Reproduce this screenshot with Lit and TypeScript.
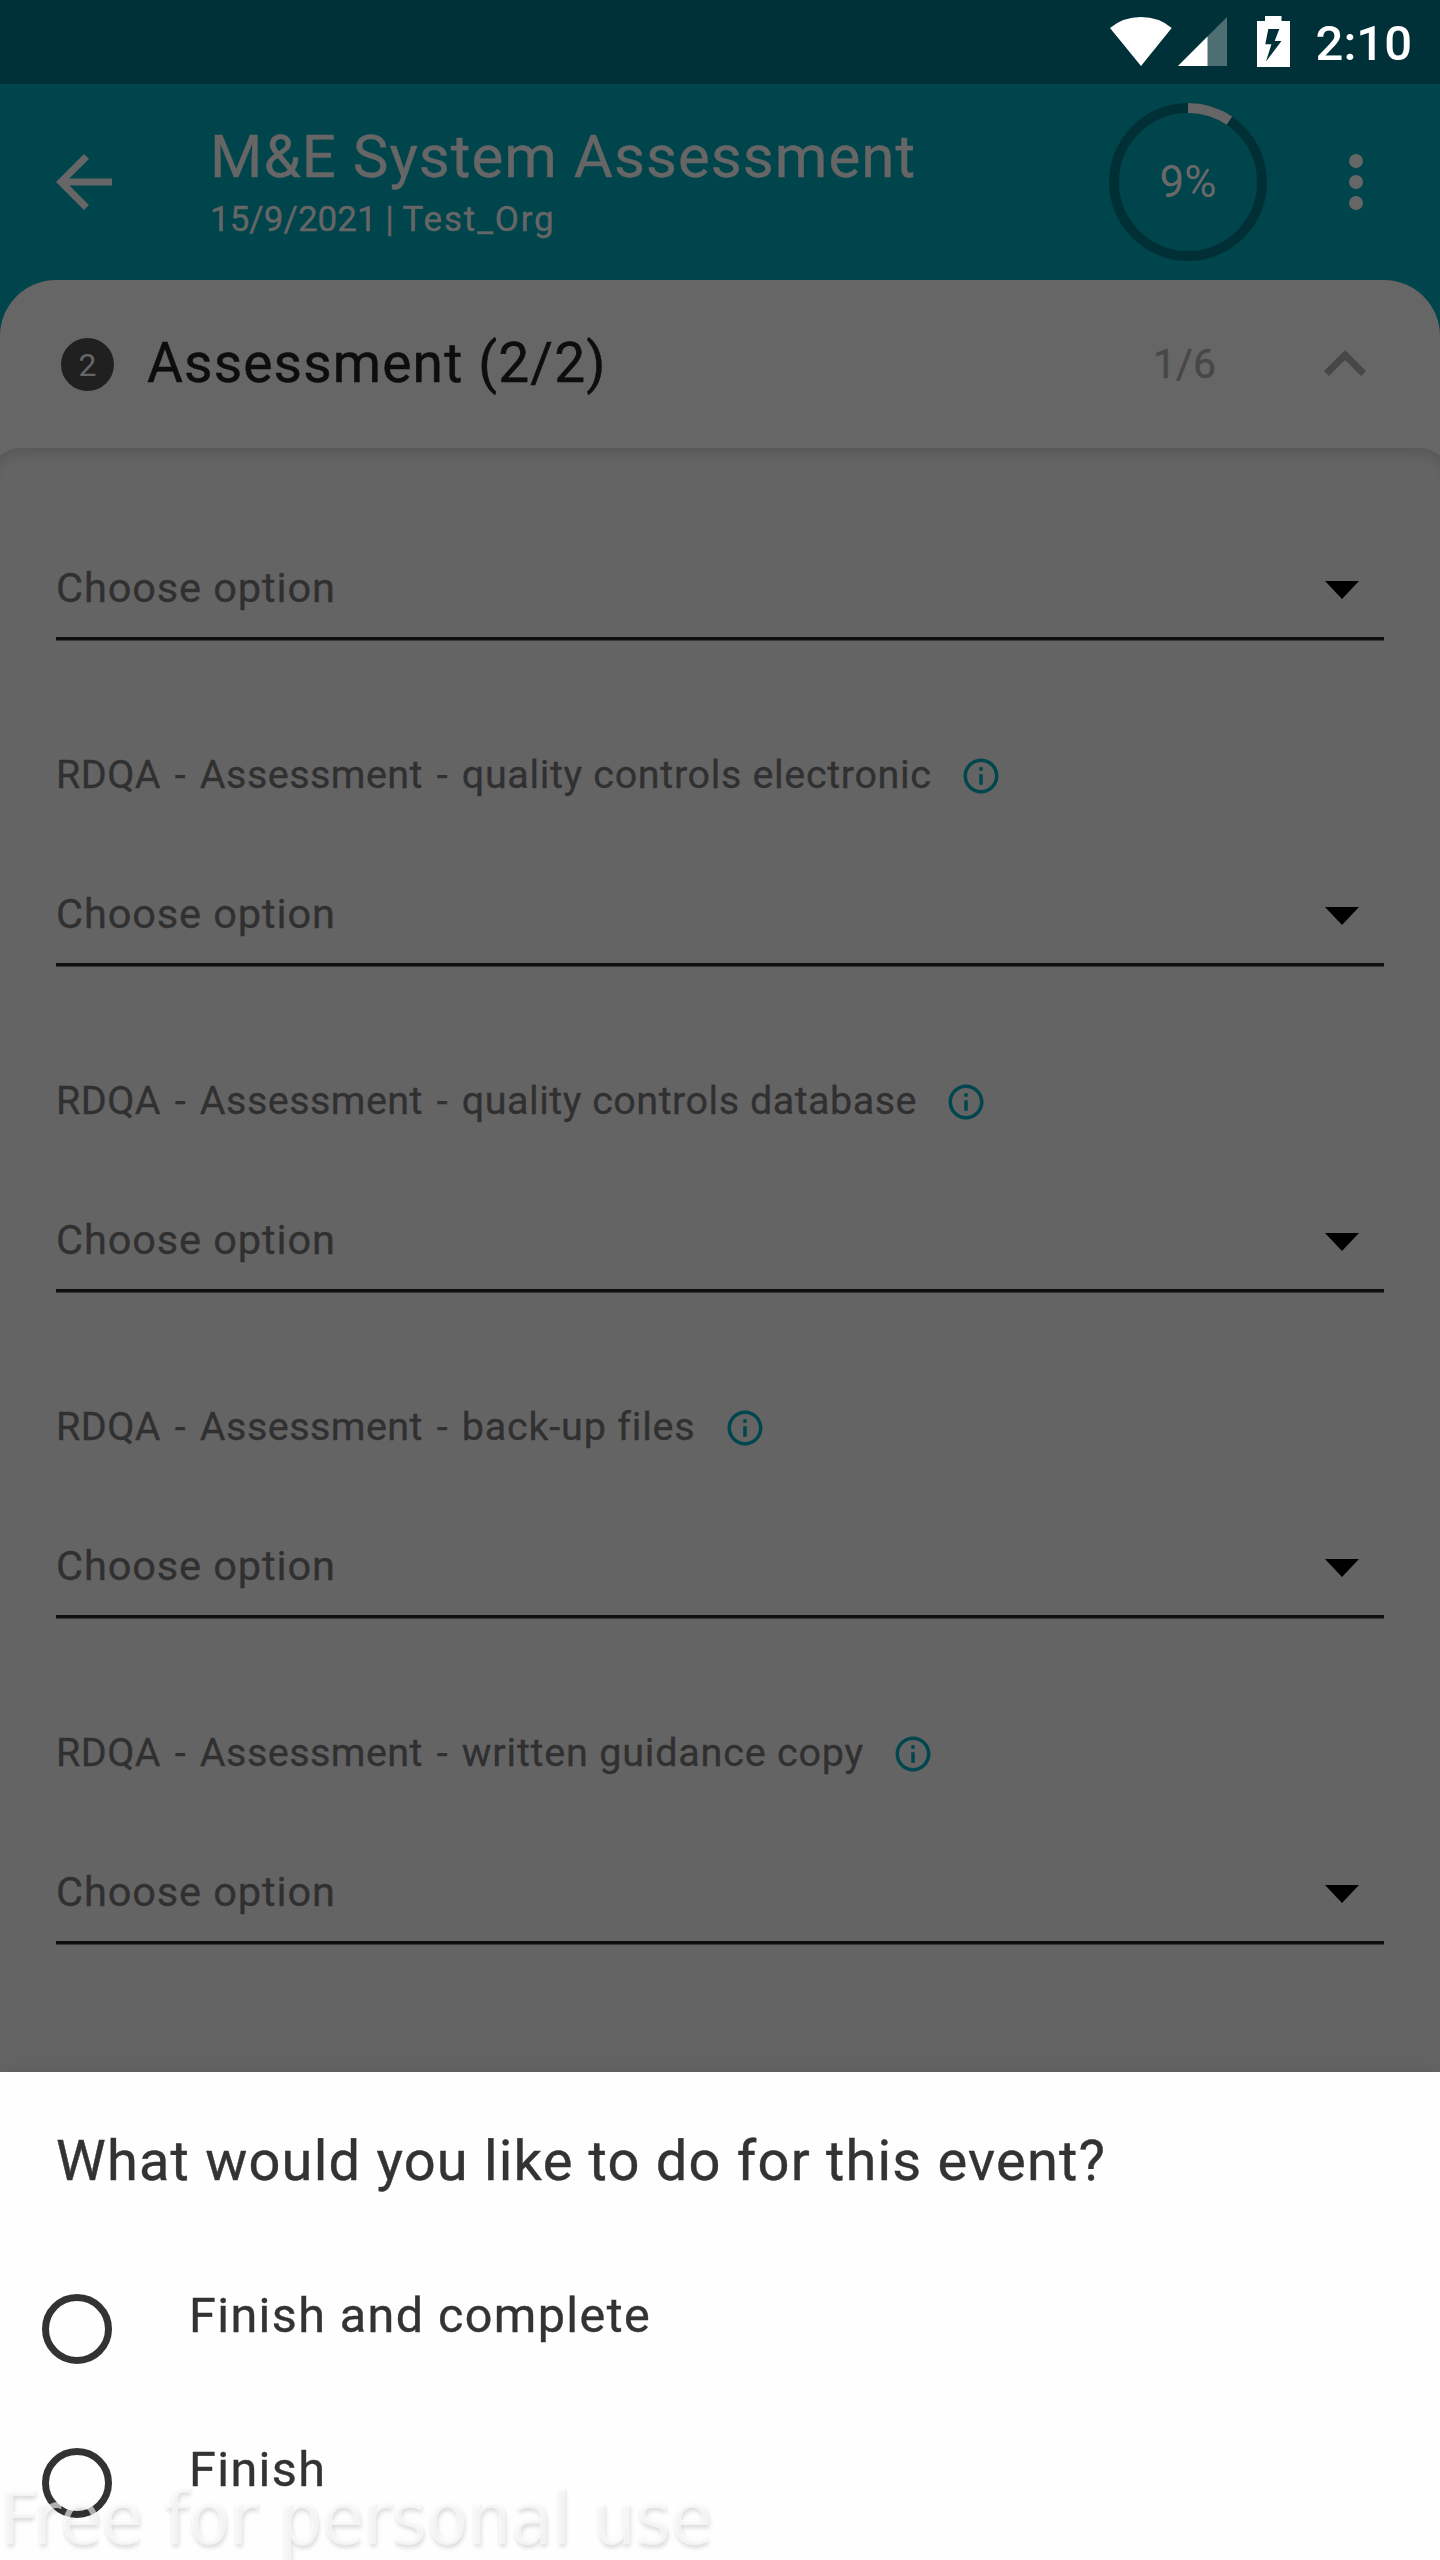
import { LitElement, html, css } from "lit";
import { customElement, property } from "lit/decorators.js";

const FIELDS = [
  { label: "", cls: "" },
  { label: "quality controls electronic", cls: "normal" },
  { label: "quality controls database", cls: "tight" },
  { label: "back-up files", cls: "loose" },
  { label: "written guidance copy", cls: "loose" },
];

@customElement("status-bar")
class StatusBar extends LitElement {
  static styles = css`
    :host { display: block; }
    .bar { height: 84px; background: #003138; display: flex; justify-content: flex-end; padding-right: 28px; box-sizing: border-box; }
    .icons { width: 190px; height: 84px; display: block; margin-right: 22px; }
    .time { font: 500 49px/84px Roboto, sans-serif; color: #fff; white-space: nowrap; padding-top: 2px; height: 82px; }
  `;
  render() {
    return html`<div class="bar">
      <svg class="icons" viewBox="1104 0 190 84">
        <path fill="#fff" d="M1110 28Q1123 17 1141 17T1171.7 28L1141 66Z" />
        <path fill="#4d6f74" d="M1227 17V66H1178Z" />
        <path fill="#fff" d="M1207.5 36.5V66H1178Z" />
        <path fill="#fff" fill-rule="evenodd" d="M1265 16H1281.5V21H1290V67H1257V21H1265ZM1268.3 29L1265.3 44.3H1271.4L1266 61.5L1281.5 41H1274.7L1279.3 29Z" />
      </svg>
      <span class="time">2:10</span>
    </div>`;
  }
}

@customElement("app-header")
class AppHeader extends LitElement {
  static styles = css`
    :host { display: block; }
    .header { height: 196px; background: #00444c; display: flex; align-items: center; padding: 0 42px; font-family: Roboto, sans-serif; color: #666; }
    .back { width: 84px; height: 84px; flex: none; }
    .titles { margin-left: 84px; width: 816px; height: 196px; padding-top: 37px; box-sizing: border-box; white-space: nowrap; -webkit-text-stroke: 0.4px #666; }
    .title { font-size: 60px; line-height: 72px; letter-spacing: 1.02px; }
    .sub { font-size: 35px; line-height: 44px; margin-top: 5px; }
    .org { letter-spacing: 1.85px; }
    .ring { width: 168px; height: 168px; margin-left: 78px; flex: none; }
    .pct { font: 44px Roboto, sans-serif; }
    .more { width: 84px; height: 84px; margin-left: 42px; flex: none; }
  `;
  render() {
    const c = 2 * Math.PI * 74;
    return html`<div class="header">
      <svg class="back" viewBox="0 0 24 24" fill="#666"><path d="M20 11H7.83l5.59-5.59L12 4l-8 8 8 8 1.41-1.41L7.83 13H20z" /></svg>
      <div class="titles">
        <div class="title">M&amp;E System Assessment</div>
        <div class="sub">15/9/2021 | <span class="org">Test_Org</span></div>
      </div>
      <svg class="ring" viewBox="0 0 168 168">
        <circle cx="84" cy="84" r="74" fill="none" stroke="#003035" stroke-width="10" />
        <circle cx="84" cy="84" r="74" fill="none" stroke="#666" stroke-width="10" stroke-dasharray="${c * 0.0944} ${c}" transform="rotate(-90 84 84)" />
        <text class="pct" x="84" y="99" text-anchor="middle" fill="#6a6868">9%</text>
      </svg>
      <svg class="more" viewBox="0 0 84 84" fill="#666">
        <circle cx="42" cy="21" r="7" /><circle cx="42" cy="42" r="7" /><circle cx="42" cy="63" r="7" />
      </svg>
    </div>`;
  }
}

@customElement("option-field")
class OptionField extends LitElement {
  @property() label = "";
  @property() variant = "";
  static styles = css`
    :host { display: block; font-family: Roboto, sans-serif; color: #303030; -webkit-text-stroke: 0.3px #303030; }
    .label { height: 48px; padding-bottom: 90px; display: flex; align-items: center; gap: 28px; font-size: 39.5px; line-height: 48px; white-space: nowrap; }
    .lead { letter-spacing: 0.45px; word-spacing: 3.5px; }
    .normal { letter-spacing: 0.65px; }
    .tight { letter-spacing: 0.5px; }
    .loose { letter-spacing: 0.8px; }
    .info { width: 42px; height: 42px; flex: none; margin-top: 1px; }
    .select { height: 74px; display: flex; justify-content: space-between; padding: 0 25px 0 0; }
    .value { font-size: 41.5px; line-height: 50px; letter-spacing: 0.9px; }
    .arrow { width: 34px; height: 18px; margin-top: 18px; }
    .line { height: 3px; background: #0f0f0f; border-bottom: 1px solid #383838; }
  `;
  render() {
    return html`
      ${this.label
        ? html`<div class="label"><span class="text"><span class="lead">RDQA - Assessment - </span><span class="${this.variant}">${this.label}</span></span>
            <svg class="info" viewBox="0 0 24 24" fill="#00464e"><path d="M11 7h2v2h-2zm0 4h2v6h-2zm1-9C6.480 2 2 6.480 2 12s4.480 10 10 10 10-4.480 10-10S17.520 2 12 2zm0 18c-4.410 0-8-3.590-8-8s3.590-8 8-8 8 3.590 8 8-3.590 8-8 8z" /></svg></div>`
        : ""}
      <div class="select"><span class="value">Choose option</span>
        <svg class="arrow" viewBox="0 0 34 18"><path d="M0 0H34L17 18Z" /></svg></div>
      <div class="line"></div>`;
  }
}

@customElement("finish-sheet")
class FinishSheet extends LitElement {
  static styles = css`
    :host { display: block; position: absolute; left: 0; right: 0; top: 2072px; bottom: 0; background: #fefefe; box-shadow: 0 -2px 16px rgba(0, 0, 0, 0.08); color: #333; font-family: Roboto, sans-serif; -webkit-text-stroke: 0.4px #333; }
    .question { padding: 53px 0 0 56px; font-size: 56px; line-height: 72px; height: 72px; letter-spacing: 1.2px; white-space: nowrap; }
    .option { display: flex; height: 70px; padding-left: 42px; margin-bottom: 84px; }
    .first { margin-top: 97px; }
    .radio { width: 70px; height: 70px; box-sizing: border-box; border: 7px solid #333; border-radius: 50%; }
    .name { margin-left: 77px; font-size: 48.5px; line-height: 58px; height: 58px; margin-top: -8px; padding-top: 1px; letter-spacing: 1.4px; white-space: nowrap; }
  `;
  render() {
    return html`<div class="question">What would you like to do for this event?</div>
      <div class="option first"><div class="radio"></div><div class="name">Finish and complete</div></div>
      <div class="option"><div class="radio"></div><div class="name">Finish</div></div>`;
  }
}

@customElement("app-root")
class AppRoot extends LitElement {
  static styles = css`
    :host { display: block; position: relative; width: 1440px; height: 2560px; overflow: hidden; background: #00444c; font-family: Roboto, sans-serif; }
    .card { height: 2280px; background: #666; border-radius: 56px 56px 0 0; }
    .section { height: 168px; display: flex; align-items: center; padding: 0 53px 0 61px; box-sizing: border-box; }
    .badge { width: 53px; height: 53px; border-radius: 50%; background: #202020; color: #666; font-size: 32px; line-height: 55px; text-align: center; }
    .name { margin-left: 33px; padding-bottom: 2px; font-size: 55px; letter-spacing: 1.2px; color: #0d0d0d; -webkit-text-stroke: 0.5px #0d0d0d; white-space: nowrap; flex: 1; }
    .count { font-size: 41px; color: #474747; margin-right: 87px; -webkit-text-stroke: 0.4px #474747; }
    .chev { width: 84px; height: 84px; }
    .form { height: 2112px; background: #646464; border-radius: 32px 32px 0 0; margin: 0 -11px; padding: 115px 67px 0; box-sizing: border-box; box-shadow: inset 0 4px 14px rgba(0, 0, 0, 0.14); }
    .fields { display: flex; flex-direction: column; gap: 110px; }
    .mark { position: absolute; left: 0; top: 2463px; font: condensed 75px/110px "DejaVu Sans Condensed", "DejaVu Sans", sans-serif; letter-spacing: 0.1px; color: rgba(255, 255, 255, 0.62); text-shadow: 1px 3px 4px rgba(0, 0, 0, 0.14); white-space: nowrap; }
  `;
  render() {
    return html`<status-bar></status-bar><app-header></app-header>
      <div class="card">
        <div class="section">
          <div class="badge">2</div><div class="name">Assessment (2/2)</div><div class="count">1/6</div>
          <svg class="chev" viewBox="0 0 24 24" fill="#474747"><path d="M7.410 15.410L12 10.830l4.590 4.580L18 14l-6-6-6 6z" /></svg>
        </div>
        <div class="form"><div class="fields">
          ${FIELDS.map((f) => html`<option-field .label=${f.label} .variant=${f.cls}></option-field>`)}
        </div></div>
      </div>
      <finish-sheet></finish-sheet>
      <div class="mark">Free for personal use</div>`;
  }
}
